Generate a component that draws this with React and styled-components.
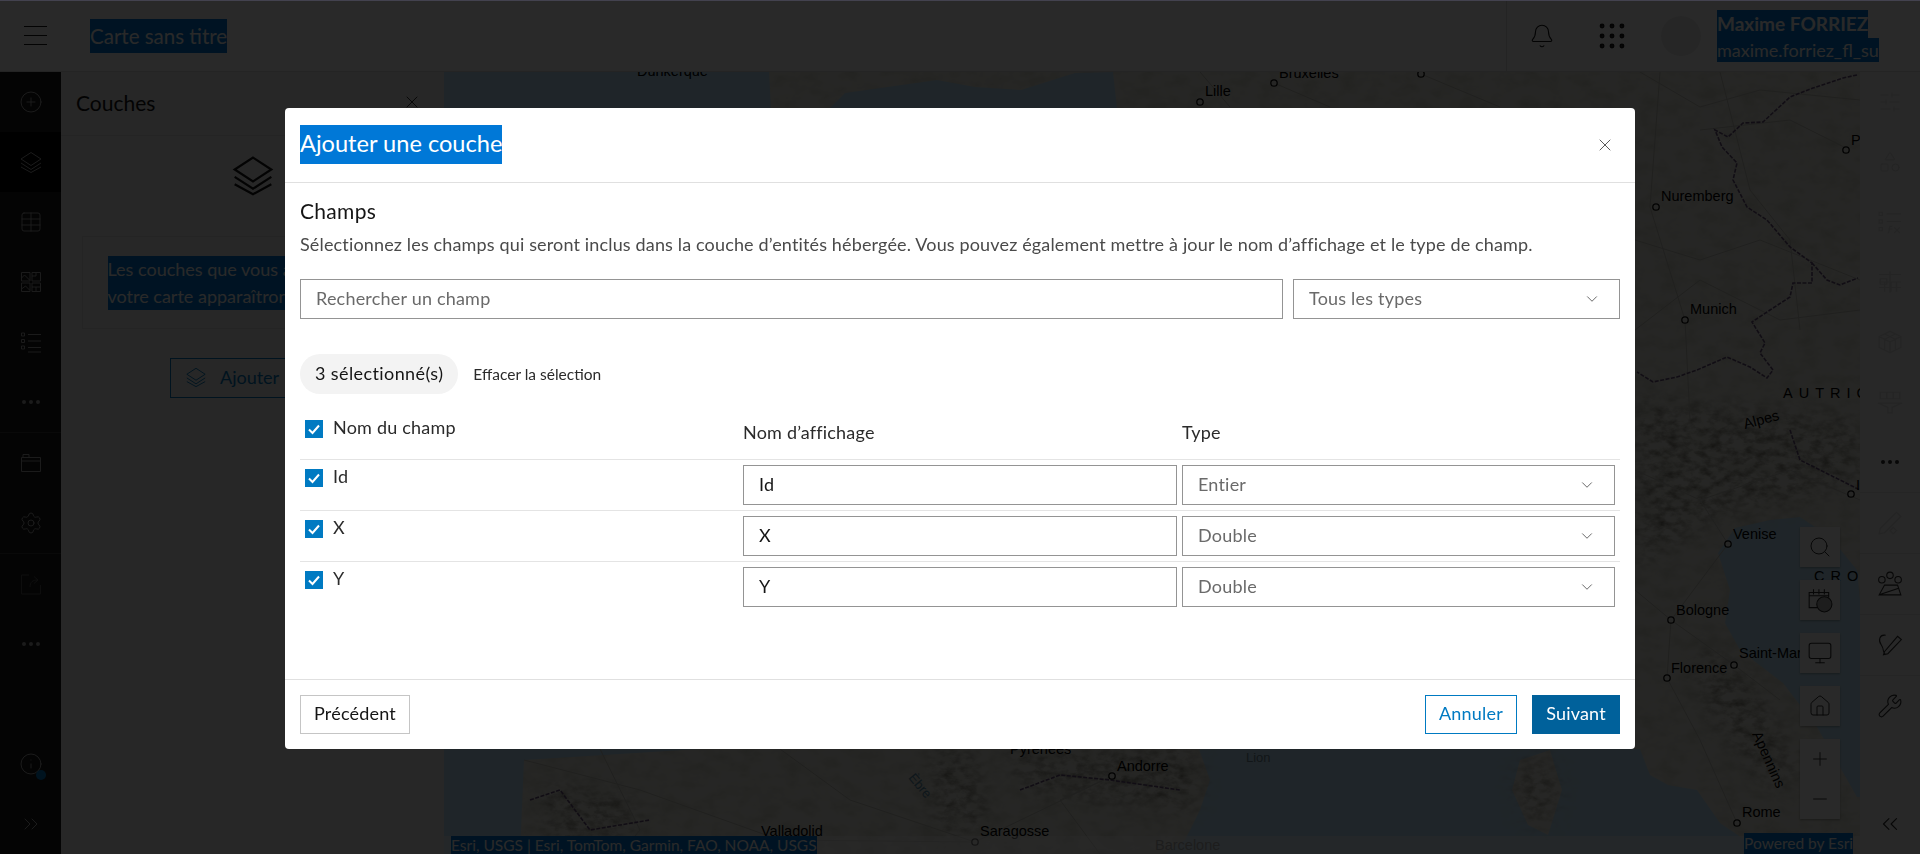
import React from "react";
import styled, { createGlobalStyle } from "styled-components";
import {
  Bell,
  ChevronDown,
  ChevronsLeft,
  ChevronsRight,
  CirclePlus,
  Ellipsis,
  Grip,
  Home,
  Info,
  Minus,
  Monitor,
  Plus,
  Search,
  Settings,
  Shapes,
  SlidersHorizontal,
  Table,
  Wrench,
  X,
} from "lucide-react";

const GlobalStyle = createGlobalStyle`
  html, body { margin: 0; height: 100%; overflow: hidden; }
  body { font-family: Lato, "Open Sans", sans-serif; color: #151515; }
  * { box-sizing: border-box; }
`;

const Page = styled.div`
  display: grid;
  grid-template-rows: 72px 1fr;
  height: 100vh;
  overflow: hidden;
  background: #fff;
`;

const TopBar = styled.header`
  display: flex;
  align-items: center;
  background: #fff;
  border-bottom: 1px solid #ddd;
`;

const Burger = styled.div`
  display: flex;
  flex-direction: column;
  gap: 8px;
  width: 23px;
  margin: 0 43px 0 24px;
  span { height: 1px; background: #151515; }
`;

const Selected = styled.span`
  display: inline-block;
  background: #0078d7;
  color: #fff;
`;

const MapTitle = styled(Selected)`
  font-size: 20.500px;
  line-height: 34px;
`;

const TopActions = styled.div`
  display: flex;
  align-items: center;
  margin-left: auto;
  height: 100%;
  width: 414px;
  border-left: 1px solid #ddd;
`;

const TopIcon = styled.div`
  display: flex;
  width: 70px;
  justify-content: center;
  color: #151515;
`;

const Avatar = styled.div`
  width: 40px;
  height: 40px;
  border-radius: 50%;
  background: #ececec;
  margin: 0 16px 0 14px;
`;

const UserName = styled.div`
  display: flex;
  flex-direction: column;
  align-items: flex-start;
  white-space: nowrap;
`;

const UserLine = styled(Selected)`
  font-size: ${(p) => (p.$bold ? "19px" : "18px")};
  font-weight: ${(p) => (p.$bold ? 700 : 400)};
  line-height: ${(p) => (p.$bold ? "28px" : "24px")};
`;

const Workspace = styled.div`
  display: flex;
  min-height: 0;
`;

const Rail = styled.nav`
  display: flex;
  flex-direction: column;
  flex: none;
  width: ${(p) => (p.$dark ? "61px" : "60px")};
  background: ${(p) => (p.$dark ? "#1b1b1b" : "#f4f4f4")};
  color: ${(p) => (p.$dark ? "#a8a8a8" : "#2b2b2b")};
`;

const RailItem = styled.div`
  position: relative;
  display: flex;
  flex: none;
  align-items: center;
  justify-content: center;
  height: ${(p) => (p.$ruled ? "61px" : "60px")};
  background: ${(p) => (p.$active ? "#000" : "transparent")};
  border-top: ${(p) => (p.$ruled ? `1px solid ${p.$ruled}` : "none")};
  color: ${(p) => p.$tone || "inherit"};
  margin-top: ${(p) => (p.$push ? "auto" : "0")};
`;

const Dot = styled.span`
  position: absolute;
  left: 36px;
  top: 36px;
  width: 10px;
  height: 10px;
  border-radius: 50%;
  background: #0079c1;
`;

const Panel = styled.aside`
  display: flex;
  flex: none;
  flex-direction: column;
  align-items: center;
  width: 383px;
  background: #f0f0f0;
`;

const PanelHead = styled.div`
  display: flex;
  align-items: center;
  justify-content: space-between;
  align-self: stretch;
  height: 64px;
  padding: 0 22px 3px 15px;
  font-size: 21px;
  border-bottom: 1px solid #ddd;
`;

const EmptyIcon = styled.div`
  display: flex;
  margin-top: 17px;
`;

const EmptyBox = styled.div`
  width: 342px;
  height: 93px;
  margin-top: 39px;
  padding: 19px 25px;
  border: 1px solid #ddd;
  font-size: 18px;
  line-height: 27px;
  white-space: nowrap;
`;

const AddButton = styled.div`
  display: flex;
  align-items: center;
  gap: 13px;
  width: 165px;
  height: 40px;
  margin-top: 29px;
  padding: 0 0 2px 14px;
  border: 1px solid #0079c1;
  color: #0079c1;
  font-size: 18px;
`;

const MapArea = styled.main`
  position: relative;
  flex: 1;
  min-width: 0;
  overflow: hidden;
  background: #ededE6;
  svg.map { display: block; width: 100%; height: 100%; }
`;

const Tools = styled.div`
  position: absolute;
  right: 20px;
  bottom: 35px;
  display: flex;
  flex-direction: column;
  gap: 13px;
`;

const ToolGroup = styled.div`
  display: flex;
  flex-direction: column;
  box-shadow: 0 1px 2px rgba(0, 0, 0, 0.3);
`;

const Tool = styled.div`
  display: flex;
  align-items: center;
  justify-content: center;
  width: 40px;
  height: 40px;
  background: #fff;
  color: #2b2b2b;
`;

const Attribution = styled.div`
  position: absolute;
  left: 0;
  right: 0;
  bottom: 0;
  display: flex;
  align-items: flex-end;
  justify-content: space-between;
  height: 18px;
  padding: 0 7px;
  background: rgba(255, 255, 255, 0.45);
  font-size: 15.500px;
  line-height: 18px;
  white-space: nowrap;
`;

const Powered = styled(Selected)`
  line-height: 21px;
`;

const Scrim = styled.div`
  position: fixed;
  inset: 0;
  display: flex;
  justify-content: center;
  align-items: flex-start;
  padding-top: 108px;
  background: rgba(0, 0, 0, 0.84);
`;

const WindowEdge = styled.div`
  position: fixed;
  inset: 0 0 auto 0;
  height: 1px;
  background: #43424f;
`;

const Dialog = styled.section`
  display: flex;
  flex-direction: column;
  width: 1350px;
  height: 641px;
  background: #fff;
  border-radius: 4px;
`;

const DialogHead = styled.div`
  display: flex;
  flex: none;
  align-items: center;
  justify-content: space-between;
  height: 75px;
  padding: 0 20px 1px 15px;
  border-bottom: 1px solid #e0e0e0;
`;

const DialogTitle = styled(Selected)`
  height: 39px;
  font-size: 23.600px;
  line-height: 36px;
`;

const DialogBody = styled.div`
  flex: 1;
  padding: 17px 15px 0;
`;

const SectionTitle = styled.h2`
  margin: 0;
  font-size: 21px;
  font-weight: 400;
  line-height: 22px;
  letter-spacing: 0.3px;
`;

const Description = styled.p`
  margin: 10px 0 23px;
  color: #4a4a4a;
  font-size: 18px;
  line-height: 24px;
  letter-spacing: 0.15px;
  white-space: nowrap;
`;

const SearchRow = styled.div`
  display: flex;
  gap: 10px;
`;

const TextInput = styled.input`
  display: block;
  width: ${(p) => p.$width || "100%"};
  height: 40px;
  padding: 0 15px 3px;
  border: 1.5px solid #949494;
  border-radius: 0;
  outline: none;
  background: #fff;
  color: #151515;
  font: inherit;
  font-size: 18px;
  letter-spacing: 0.2px;
  &::placeholder { color: #6a6a6a; opacity: 1; }
`;

const SelectBox = styled.div`
  display: flex;
  flex: ${(p) => (p.$grow ? "1" : "none")};
  align-items: center;
  justify-content: space-between;
  height: 40px;
  padding: 0 18px 3px 15px;
  border: 1.5px solid #949494;
  color: #6a6a6a;
  font-size: 18px;
  letter-spacing: 0.2px;
  svg { margin-top: 3px; }
`;

const ChipRow = styled.div`
  display: flex;
  align-items: center;
  gap: 15px;
  margin-top: 35px;
`;

const Chip = styled.div`
  display: flex;
  align-items: center;
  height: 40px;
  padding: 0 15px 2px;
  border-radius: 20px;
  background: #f3f3f3;
  font-size: 18px;
  letter-spacing: 0.4px;
`;

const ClearLink = styled.span`
  color: #2b2b2b;
  font-size: 15.500px;
`;

const TableRow = styled.div`
  display: grid;
  grid-template-columns: 438px 434px 433px;
  column-gap: 5px;
  height: ${(p) => (p.$head ? "65px" : "51px")};
  padding-top: ${(p) => (p.$head ? "26px" : "5px")};
  border-top: ${(p) => (p.$head ? "none" : "1px solid #e4e4e4")};
`;

const CheckCell = styled.div`
  display: flex;
  gap: 10px;
  align-items: flex-start;
  padding: ${(p) => (p.$head ? "0" : "4px")} 0 0 5px;
  color: #2b2b2b;
  font-size: 18px;
  line-height: 15px;
  letter-spacing: 0.2px;
`;

const ColumnLabel = styled.div`
  color: #2b2b2b;
  font-size: 18px;
  line-height: 24px;
  letter-spacing: 0.2px;
`;

const CheckMark = styled.span`
  display: flex;
  flex: none;
  align-items: center;
  justify-content: center;
  width: 18px;
  height: 18px;
  background: #007ac2;
`;

const DialogFoot = styled.div`
  display: flex;
  flex: none;
  align-items: flex-start;
  height: 70px;
  padding: 15px;
  gap: 15px;
  border-top: 1px solid #e0e0e0;
`;

const FootButton = styled.button`
  height: 39px;
  width: ${(p) => p.$width};
  margin-left: ${(p) => (p.$push ? "auto" : "0")};
  padding: 0 0 3px;
  border: 1px solid ${(p) => (p.$kind === "plain" ? "#c5c5c5" : p.$kind === "primary" ? "#00619b" : "#007ac2")};
  background: ${(p) => (p.$kind === "primary" ? "#00619b" : "#fff")};
  color: ${(p) => (p.$kind === "plain" ? "#151515" : p.$kind === "primary" ? "#fff" : "#007ac2")};
  font: inherit;
  font-size: 18px;
  letter-spacing: 0.2px;
`;

const LayersIcon = ({ size = 24, stroke = 1 }) => (
  <svg width={size} height={size} viewBox="0 0 24 24" fill="none" stroke="currentColor" strokeWidth={stroke}>
    <path d="M12 2.5 22 9l-10 6.5L2 9z" />
    <path d="m2 13 10 6.5L22 13" />
    <path d="m2 17 10 5.5L22 17" />
  </svg>
);

const BasemapIcon = () => (
  <svg width="24" height="24" viewBox="0 0 24 24" fill="none" stroke="currentColor">
    <path d="M2.5 2.5h8.5v8.5H2.5zM13 2.5h8.5v8.5H13zM2.5 13h8.5v8.5H2.5zM13 13h8.5v8.5H13z" />
    <path d="m2.5 8 3-3 5 5M13 6h4V2.5M2.5 19l4-3 4 4M13 17h8.5M17 17v4" />
  </svg>
);

const LegendIcon = () => (
  <svg width="24" height="24" viewBox="0 0 24 24" fill="none" stroke="currentColor">
    <path d="M2.5 3h3v3h-3zM2.5 9.500h3v3h-3zM2.500 16h3v3h-3zM9 4.500h13M9 11h13M9 17.500h13M9 22h13" />
  </svg>
);

const FolderIcon = () => (
  <svg width="24" height="24" viewBox="0 0 24 24" fill="none" stroke="currentColor">
    <path d="M2.5 6.500h19v14h-19zM2.500 10h19M4 6.500V3.500h6v3" />
  </svg>
);

const ShareIcon = () => (
  <svg width="24" height="24" viewBox="0 0 24 24" fill="none" stroke="currentColor">
    <path d="M10 3H2.500v19h19v-9M11 15c0-5 3-7 7-7M15 4.500l4 3.500-4 3.500" />
  </svg>
);

const AnalysisIcon = () => (
  <svg width="26" height="26" viewBox="0 0 24 24" fill="none" stroke="currentColor">
    <path d="M2 5h20M2 12h20M2 17h20M3 9h6v5H3zM13 12v9M18 12v9M7 12v9M12 2v20" />
  </svg>
);

const ExpressionIcon = () => (
  <svg width="26" height="26" viewBox="0 0 24 24" fill="none" stroke="currentColor">
    <path d="M2 3h3v3H2zM2 10h3v3H2zM2 17h3v3H2zM9 4.500h13M9 11.500h13M10 22c2 0 1-6 2-6h2M10.500 18.500H14M16 17l5 5M21 17l-5 5" />
  </svg>
);

const CubeIcon = () => (
  <svg width="26" height="26" viewBox="0 0 24 24" fill="none" stroke="currentColor">
    <path d="M12 2 22 7v10l-10 5-10-5V7zM2 7l10 5 10-5M12 12v10M7 4.500 17 9.500v10M17 4.500 7 9.500v10" />
  </svg>
);

const FilterIcon = () => (
  <svg width="26" height="26" viewBox="0 0 24 24" fill="none" stroke="currentColor">
    <path d="M3 3h18v6H3zM1 13h22l-9 4v5h-4v-5zM9 3v6M15 3v6" />
  </svg>
);

const EditGeoIcon = () => (
  <svg width="26" height="26" viewBox="0 0 24 24" fill="none" stroke="currentColor">
    <path d="M3 17 18 2l4 4L7 21l-5 1zM15 16l3 3-3 3-3-3z" />
  </svg>
);

const ClusterIcon = () => (
  <svg width="26" height="26" viewBox="0 0 24 24" fill="none" stroke="currentColor">
    <circle cx="12" cy="4" r="3" />
    <circle cx="4.500" cy="8" r="3" />
    <circle cx="19.500" cy="8" r="3" />
    <path d="M7 13h12l3 9H2zM2 22l18-6" />
  </svg>
);

const SketchIcon = () => (
  <svg width="26" height="26" viewBox="0 0 24 24" fill="none" stroke="currentColor">
    <path d="M7 18 19 4l3.500 3L10 20l-4 1zM8 3C2 2 1 8 4 12s1 8 4 9" />
  </svg>
);

const TimeGlobeIcon = () => (
  <svg width="26" height="26" viewBox="0 0 24 24" fill="none" stroke="currentColor">
    <path d="M10 19H2V5h18v5M2 8h18M6 2v5M11 2v5M16 2v5" />
    <circle cx="16" cy="16" r="7" fill="currentColor" fillOpacity="0.35" />
  </svg>
);

const Check = () => (
  <svg width="14" height="14" viewBox="0 0 14 14" fill="none" stroke="#fff" strokeWidth="2">
    <path d="m2 7.500 3.500 3.500L12 3.500" />
  </svg>
);

const placeDots = [
  [1200, 102], [1274, 83], [1421, 74], [1656, 207], [1685, 320], [1846, 150],
  [1851, 494], [1728, 544], [1671, 620], [1734, 665], [1667, 678], [1737, 823],
  [975, 842], [1112, 776], [1290, 745],
];

const placeNames = [
  ["Lille", 1205, 96],
  ["Bruxelles", 1279, 78],
  ["Dunkerque", 637, 76],
  ["Nuremberg", 1661, 201],
  ["Munich", 1690, 314],
  ["Venise", 1733, 539],
  ["Bologne", 1676, 615],
  ["Saint-Marin", 1739, 658],
  ["Florence", 1671, 673],
  ["Rome", 1742, 817],
  ["Andorre", 1117, 771],
  ["Valladolid", 761, 836],
  ["Saragosse", 980, 836],
  ["P", 1851, 145],
  ["I", 1856, 490],
];

const roads = [
  "M1635 240 L1700 260 L1760 240 L1860 280",
  "M1660 72 L1650 207 L1685 320 L1690 420",
  "M1635 330 L1700 280 L1780 320 L1860 310",
  "M1720 72 L1750 190 L1790 240 L1800 330",
  "M1635 470 L1700 500 L1728 544 L1671 620 L1667 678",
  "M1635 590 L1671 620 L1734 665 L1780 700",
  "M1667 678 L1700 740 L1737 823",
  "M1700 500 L1790 470 L1860 500",
  "M1850 150 L1790 120 L1700 130",
  "M524 760 L640 790 L780 840 L975 842",
  "M780 749 L850 800 L975 842 L1112 776",
  "M600 749 L640 830 L620 854",
  "M1100 854 L1060 800 L1112 776",
  "M1200 72 L1230 107 M1274 83 L1330 107 M1421 74 L1500 107",
  "M1640 72 L1700 107 L1760 90 L1860 100",
];

const MapPicture = () => (
  <svg className="map" viewBox="444 72 1416 782" preserveAspectRatio="none">
    <defs>
      <filter id="grain" x="0" y="0" width="100%" height="100%">
        <feTurbulence type="fractalNoise" baseFrequency="0.05 0.08" numOctaves="3" seed="3" />
        <feColorMatrix values="0 0 0 0 0.2  0 0 0 0 0.22  0 0 0 0 0.12  0.4 0 0 0 -0.16" />
        <feComposite in2="SourceAlpha" operator="in" />
      </filter>
      <filter id="relief" x="-10%" y="-10%" width="120%" height="120%">
        <feTurbulence type="fractalNoise" baseFrequency="0.09 0.14" numOctaves="4" seed="7" result="noise" />
        <feColorMatrix in="noise" values="0 0 0 0 0.12  0 0 0 0 0.11  0 0 0 0 0.08  1.400 0 0 0 -0.55" result="shade" />
        <feGaussianBlur in="SourceAlpha" stdDeviation="12" result="mask" />
        <feComposite in="shade" in2="mask" operator="in" />
      </filter>
    </defs>
    <rect x="444" y="72" width="1416" height="782" fill="#ecece3" />
    <rect x="444" y="72" width="1416" height="782" fill="#000" filter="url(#grain)" />
    <g fill="#c2e6fb">
      <path d="M444 72H769L771 108L750 400L700 749L524 760L520 854H444Z" />
      <path d="M830 108L845 93L937 80L975 87L1021 90L1075 73L1113 72L1117 108Z" />
      <path d="M1199 749L1210 780L1200 810L1185 840L1165 854H1750L1745 840L1720 823L1697 790L1668 785L1650 775L1640 749Z" />
      <path d="M1718 553L1735 528L1770 520L1800 517L1830 537L1857 570L1860 600V797L1857 797L1817 727L1783 683L1740 650L1725 623L1730 590Z" />
    </g>
    <path d="M1520 760L1550 750L1562 790L1548 835L1528 825L1512 790Z" fill="#ecece3" />
    <g filter="url(#relief)" fill="#000">
      <path d="M1635 400L1760 410L1860 420V480L1800 500L1720 515L1635 570Z" />
      <path d="M1000 749H1195L1200 790L1190 810L1100 800L1030 790Z" />
      <path d="M1520 765L1548 755L1558 790L1545 830L1528 820L1516 790Z" />
      <path d="M1700 640L1760 690L1800 780L1770 790L1700 700Z" />
      <path d="M930 749H975L990 825L935 835Z" />
      <path d="M540 785L630 795L640 835L550 845Z" />
    </g>
    <g fill="none" stroke="#c6c6bd" strokeWidth="1">
      {roads.map((d) => (
        <path key={d} d={d} />
      ))}
    </g>
    <g fill="none" stroke="#6b557f" strokeWidth="1.600" strokeDasharray="4 1.500">
      <path d="M1857 75L1843 78L1813 88L1790 97L1763 122L1743 123L1728 137L1715 130L1722 147L1737 163L1733 180L1747 207L1767 220L1790 247L1812 263L1812 283L1793 283L1790 297L1770 310L1752 322L1765 343L1760 353L1773 370L1767 378L1750 367L1727 357L1697 370L1677 377L1653 382L1637 372" />
      <path d="M1812 263L1827 280L1840 285L1858 278" />
      <path d="M1790 430L1800 460L1860 490" />
      <path d="M1020 790L1060 775L1110 780L1180 790" />
      <path d="M530 800L560 790L590 830L650 820" />
    </g>
    <g fill="#ecece3" stroke="#111" strokeWidth="1.300">
      {placeDots.map(([x, y]) => (
        <circle key={`${x}-${y}`} cx={x} cy={y} r="3.200" />
      ))}
    </g>
    <g fontFamily="Liberation Sans, sans-serif" fontSize="14.500" fill="#000">
      {placeNames.map(([name, x, y]) => (
        <text key={name} x={x} y={y}>
          {name}
        </text>
      ))}
      <text x="1783" y="398" letterSpacing="6">AUTRICHE</text>
      <text x="1814" y="581" letterSpacing="6">CROATIE</text>
      <text transform="translate(1745 429) rotate(-15)">Alpes</text>
      <text transform="translate(1752 734) rotate(66)">Apennins</text>
      <text x="1010" y="754">Pyrénées</text>
      <text x="1155" y="850" fill="#777">Barcelone</text>
      <text x="1246" y="762" fill="#6f8996" fontSize="13">Lion</text>
      <text transform="translate(908 778) rotate(50)" fill="#5b8ea8" fontSize="13">Èbre</text>
    </g>
  </svg>
);

const fields = [
  { name: "Id", type: "Entier" },
  { name: "X", type: "Double" },
  { name: "Y", type: "Double" },
];

const leftRule = "#3a3a3a";
const rightRule = "#e3e3e3";
const dimTone = "#dcdcdc";

export default function App() {
  return (
    <>
      <GlobalStyle />
      <Page>
        <TopBar>
          <Burger>
            <span />
            <span />
            <span />
          </Burger>
          <MapTitle>Carte sans titre</MapTitle>
          <TopActions>
            <TopIcon>
              <Bell size={26} strokeWidth={1} />
            </TopIcon>
            <TopIcon>
              <Grip size={34} strokeWidth={1.500} />
            </TopIcon>
            <Avatar />
            <UserName>
              <UserLine $bold>Maxime FORRIEZ</UserLine>
              <UserLine>maxime.forriez_fl_su</UserLine>
            </UserName>
          </TopActions>
        </TopBar>
        <Workspace>
          <Rail $dark>
            <RailItem>
              <CirclePlus size={24} strokeWidth={1} />
            </RailItem>
            <RailItem $active>
              <LayersIcon size={24} />
            </RailItem>
            <RailItem>
              <Table size={24} strokeWidth={1} />
            </RailItem>
            <RailItem>
              <BasemapIcon />
            </RailItem>
            <RailItem>
              <LegendIcon />
            </RailItem>
            <RailItem>
              <Ellipsis size={24} strokeWidth={2} />
            </RailItem>
            <RailItem $ruled={leftRule}>
              <FolderIcon />
            </RailItem>
            <RailItem>
              <Settings size={24} strokeWidth={1} />
            </RailItem>
            <RailItem $ruled={leftRule} $tone="#555">
              <ShareIcon />
            </RailItem>
            <RailItem>
              <Ellipsis size={24} strokeWidth={2} />
            </RailItem>
            <RailItem $push>
              <Info size={24} strokeWidth={1} />
              <Dot />
            </RailItem>
            <RailItem>
              <ChevronsRight size={24} strokeWidth={1} />
            </RailItem>
          </Rail>
          <Panel>
            <PanelHead>
              Couches
              <X size={20} strokeWidth={1} />
            </PanelHead>
            <EmptyIcon>
              <LayersIcon size={44} stroke={1.200} />
            </EmptyIcon>
            <EmptyBox>
              <Selected>Les couches que vous ajoutez à</Selected>
              <br />
              <Selected>votre carte apparaîtront ici.</Selected>
            </EmptyBox>
            <AddButton>
              <LayersIcon size={22} />
              Ajouter
            </AddButton>
          </Panel>
          <MapArea>
            <MapPicture />
            <Tools>
              <ToolGroup>
                <Tool>
                  <Search size={24} strokeWidth={1} />
                </Tool>
              </ToolGroup>
              <ToolGroup>
                <Tool>
                  <TimeGlobeIcon />
                </Tool>
              </ToolGroup>
              <ToolGroup>
                <Tool>
                  <Monitor size={26} strokeWidth={1} />
                </Tool>
              </ToolGroup>
              <ToolGroup>
                <Tool>
                  <Home size={24} strokeWidth={1} />
                </Tool>
              </ToolGroup>
              <ToolGroup>
                <Tool>
                  <Plus size={22} strokeWidth={1} />
                </Tool>
                <Tool>
                  <Minus size={22} strokeWidth={1} />
                </Tool>
              </ToolGroup>
            </Tools>
            <Attribution>
              <Selected>Esri, USGS | Esri, TomTom, Garmin, FAO, NOAA, USGS</Selected>
              <Powered>Powered by Esri</Powered>
            </Attribution>
          </MapArea>
          <Rail>
            <RailItem $tone={dimTone}>
              <SlidersHorizontal size={24} strokeWidth={1} />
            </RailItem>
            <RailItem $tone={dimTone}>
              <Shapes size={24} strokeWidth={1} />
            </RailItem>
            <RailItem $tone={dimTone}>
              <ExpressionIcon />
            </RailItem>
            <RailItem $tone={dimTone}>
              <AnalysisIcon />
            </RailItem>
            <RailItem $tone={dimTone}>
              <CubeIcon />
            </RailItem>
            <RailItem $tone={dimTone}>
              <FilterIcon />
            </RailItem>
            <RailItem>
              <Ellipsis size={24} strokeWidth={2} />
            </RailItem>
            <RailItem $ruled={rightRule} $tone={dimTone}>
              <EditGeoIcon />
            </RailItem>
            <RailItem $ruled={rightRule}>
              <ClusterIcon />
            </RailItem>
            <RailItem $ruled={rightRule}>
              <SketchIcon />
            </RailItem>
            <RailItem $ruled={rightRule}>
              <Wrench size={26} strokeWidth={1} />
            </RailItem>
            <RailItem $push>
              <ChevronsLeft size={26} strokeWidth={1} />
            </RailItem>
          </Rail>
        </Workspace>
      </Page>
      <Scrim>
        <Dialog>
          <DialogHead>
            <DialogTitle>Ajouter une couche</DialogTitle>
            <X size={20} strokeWidth={1.100} color="#4a4a4a" />
          </DialogHead>
          <DialogBody>
            <SectionTitle>Champs</SectionTitle>
            <Description>
              Sélectionnez les champs qui seront inclus dans la couche d’entités hébergée. Vous pouvez également mettre à jour le nom d’affichage et le type de champ.
            </Description>
            <SearchRow>
              <TextInput $width="983px" placeholder="Rechercher un champ" readOnly />
              <SelectBox $grow>
                Tous les types
                <ChevronDown size={18} strokeWidth={1.100} color="#4a4a4a" />
              </SelectBox>
            </SearchRow>
            <ChipRow>
              <Chip>3 sélectionné(s)</Chip>
              <ClearLink>Effacer la sélection</ClearLink>
            </ChipRow>
            <TableRow $head>
              <CheckCell $head>
                <CheckMark>
                  <Check />
                </CheckMark>
                Nom du champ
              </CheckCell>
              <ColumnLabel>Nom d’affichage</ColumnLabel>
              <ColumnLabel>Type</ColumnLabel>
            </TableRow>
            {fields.map((field) => (
              <TableRow key={field.name}>
                <CheckCell>
                  <CheckMark>
                    <Check />
                  </CheckMark>
                  {field.name}
                </CheckCell>
                <TextInput value={field.name} readOnly />
                <SelectBox>
                  {field.type}
                  <ChevronDown size={18} strokeWidth={1.100} color="#4a4a4a" />
                </SelectBox>
              </TableRow>
            ))}
          </DialogBody>
          <DialogFoot>
            <FootButton $kind="plain" $width="110px">
              Précédent
            </FootButton>
            <FootButton $kind="outline" $width="92px" $push>
              Annuler
            </FootButton>
            <FootButton $kind="primary" $width="88px">
              Suivant
            </FootButton>
          </DialogFoot>
        </Dialog>
      </Scrim>
      <WindowEdge />
    </>
  );
}
